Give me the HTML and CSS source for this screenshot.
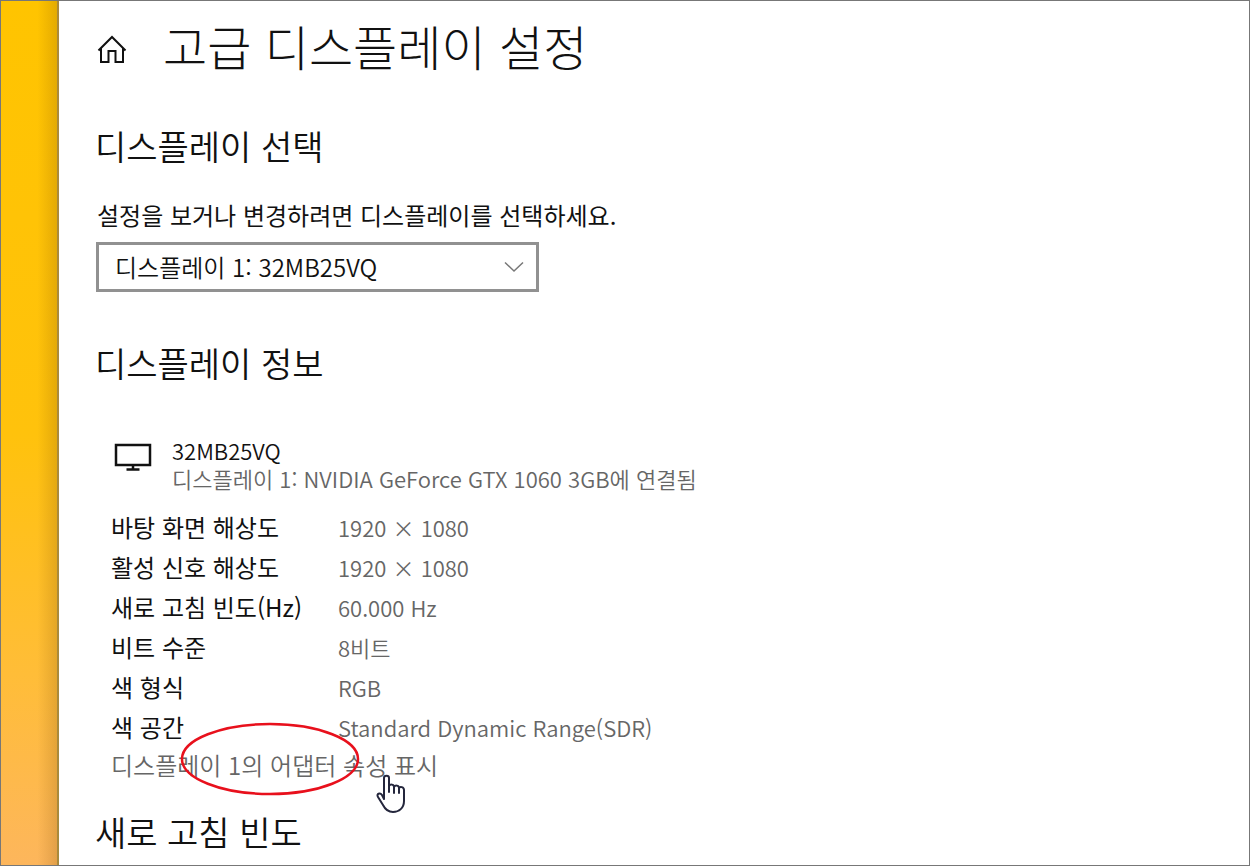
FILE: index.html
```html
<!DOCTYPE html>
<html lang="ko">
<head>
  <meta charset="UTF-8">
  <title>고급 디스플레이 설정</title>
  <link rel="stylesheet" href="styles.css">
</head>
<body>
  <div class="desktop"></div>

  <main class="settings">
    <header class="title-bar">
      <a class="home" href="#" aria-label="홈">
        <svg width="30" height="30" viewBox="0 0 30 30" fill="none" stroke="#111" stroke-width="2">
          <path d="M1.5 16.5 L15 3 L28.5 16.5"/>
          <path d="M4 14 V28 H11.5 V17 H18.5 V28 H26 V14"/>
        </svg>
      </a>
      <h1>고급 디스플레이 설정</h1>
    </header>

    <section class="choose">
      <h2>디스플레이 선택</h2>
      <label for="display">설정을 보거나 변경하려면 디스플레이를 선택하세요.</label>
      <div class="select-box">
        <select id="display">
          <option>디스플레이 1: 32MB25VQ</option>
        </select>
        <svg class="chevron" width="20" height="12" viewBox="0 0 20 12" fill="none" stroke="#777" stroke-width="1.5">
          <path d="M1 1.5 L10 10 L19 1.5"/>
        </svg>
      </div>
    </section>

    <section class="info">
      <h2>디스플레이 정보</h2>
      <div class="monitor">
        <svg width="38" height="28" viewBox="0 0 38 28" fill="none" stroke="#111" stroke-width="2.5">
          <rect x="2" y="2" width="34" height="20"/>
          <path d="M19 22 V26 M12.5 26.5 H25.5"/>
        </svg>
        <div>
          <p class="monitor-name">32MB25VQ</p>
          <p class="monitor-link">디스플레이 1: NVIDIA GeForce GTX 1060 3GB에 연결됨</p>
        </div>
      </div>

      <table>
        <tr><th scope="row">바탕 화면 해상도</th><td>1920 × 1080</td></tr>
        <tr><th scope="row">활성 신호 해상도</th><td>1920 × 1080</td></tr>
        <tr><th scope="row">새로 고침 빈도(Hz)</th><td>60.000 Hz</td></tr>
        <tr><th scope="row">비트 수준</th><td>8비트</td></tr>
        <tr><th scope="row">색 형식</th><td>RGB</td></tr>
        <tr><th scope="row">색 공간</th><td>Standard Dynamic Range(SDR)</td></tr>
      </table>

      <div class="adapter">
        <a href="#">디스플레이 1의 어댑터 속성 표시</a>
        <svg class="circle" width="180" height="74" viewBox="0 0 180 74" fill="none" stroke="#e8101c" stroke-width="2.5">
          <ellipse cx="90" cy="37" rx="88" ry="35"/>
        </svg>
        <svg class="hand" width="30" height="40" viewBox="0 0 30 40" fill="#fff" stroke="#24263c" stroke-width="2" stroke-linejoin="round" stroke-linecap="round">
          <path d="M8 25 V4 C8 1 13 1 13 4 V12 C14 10 18 10 18 13 C19 11 23 11 23 14 C24 12 28 13 28 16 V27 C28 34 23 38 17 38 C12 38 9 35 7 31 L2 23 C0 20 4 18 6 21 Z"/>
          <path d="M13 12 V18 M18 13 V19 M23 14 V19"/>
        </svg>
      </div>
    </section>

    <h2 class="refresh">새로 고침 빈도</h2>
  </main>
</body>
</html>
```

FILE: styles.css
```css
* {
  box-sizing: border-box;
}
body {
  margin: 0;
  min-height: 100vh;
  display: flex;
  border: 1px solid #777;
  background: #fff;
  color: #111;
  font-family: "Noto Sans CJK KR", sans-serif;
  font-size: 24px;
  line-height: 28px;
}
h1, h2, p {
  margin: 0;
  font-weight: 350;
}
.desktop {
  flex: 0 0 58px;
  border-right: 2px solid #a98a3c;
  background:
    linear-gradient(to right, transparent 65%, rgba(120, 70, 0, 0.2)),
    linear-gradient(#ffc400, #ffc20c 50%, #ffbd38 78%, #fdb65c);
}
.settings {
  flex: 1;
  padding: 14px 36px 0;
}
h1 {
  font-size: 48px;
  line-height: 60px;
  font-weight: 300;
}
h2 {
  font-size: 34px;
  line-height: 44px;
}
.title-bar {
  display: flex;
  align-items: center;
  gap: 36px;
  padding-left: 2px;
}
.home {
  display: flex;
  padding-top: 8px;
}
.choose {
  padding-top: 49px;
}
.choose label {
  display: block;
  margin: 33px 0 13px;
  padding-left: 2px;
}
.select-box {
  position: relative;
  width: 443px;
  margin-left: 1px;
}
select {
  appearance: none;
  display: block;
  width: 100%;
  height: 50px;
  padding: 0 16px;
  border: 3px solid #919191;
  border-radius: 0;
  background: #fff;
  color: #111;
  font: inherit;
  font-weight: 350;
}
.chevron {
  position: absolute;
  right: 15px;
  top: 19px;
}
.info {
  padding: 49px 0 0 16px;
}
.info h2 {
  margin-left: -16px;
}
.monitor {
  display: flex;
  gap: 20px;
  margin: 51px 0 15px;
  padding-left: 3px;
}
.monitor svg {
  margin-top: 7px;
}
.monitor p, td {
  font-size: 22px;
}
.monitor-link, td, .adapter {
  color: #666;
  font-weight: 350;
}
table {
  border-collapse: collapse;
}
th, td {
  height: 40px;
  padding: 0;
  text-align: left;
}
th {
  width: 227px;
  font-weight: 400;
}
.adapter {
  position: relative;
  padding-top: 4px;
}
.adapter a {
  color: inherit;
  text-decoration: none;
}
/* red marker and pointer lie over the link */
.circle {
  position: absolute;
  left: 69px;
  top: -25px;
}
.hand {
  position: absolute;
  left: 265px;
  top: 27px;
}
.refresh {
  margin-top: 31px;
}
```
